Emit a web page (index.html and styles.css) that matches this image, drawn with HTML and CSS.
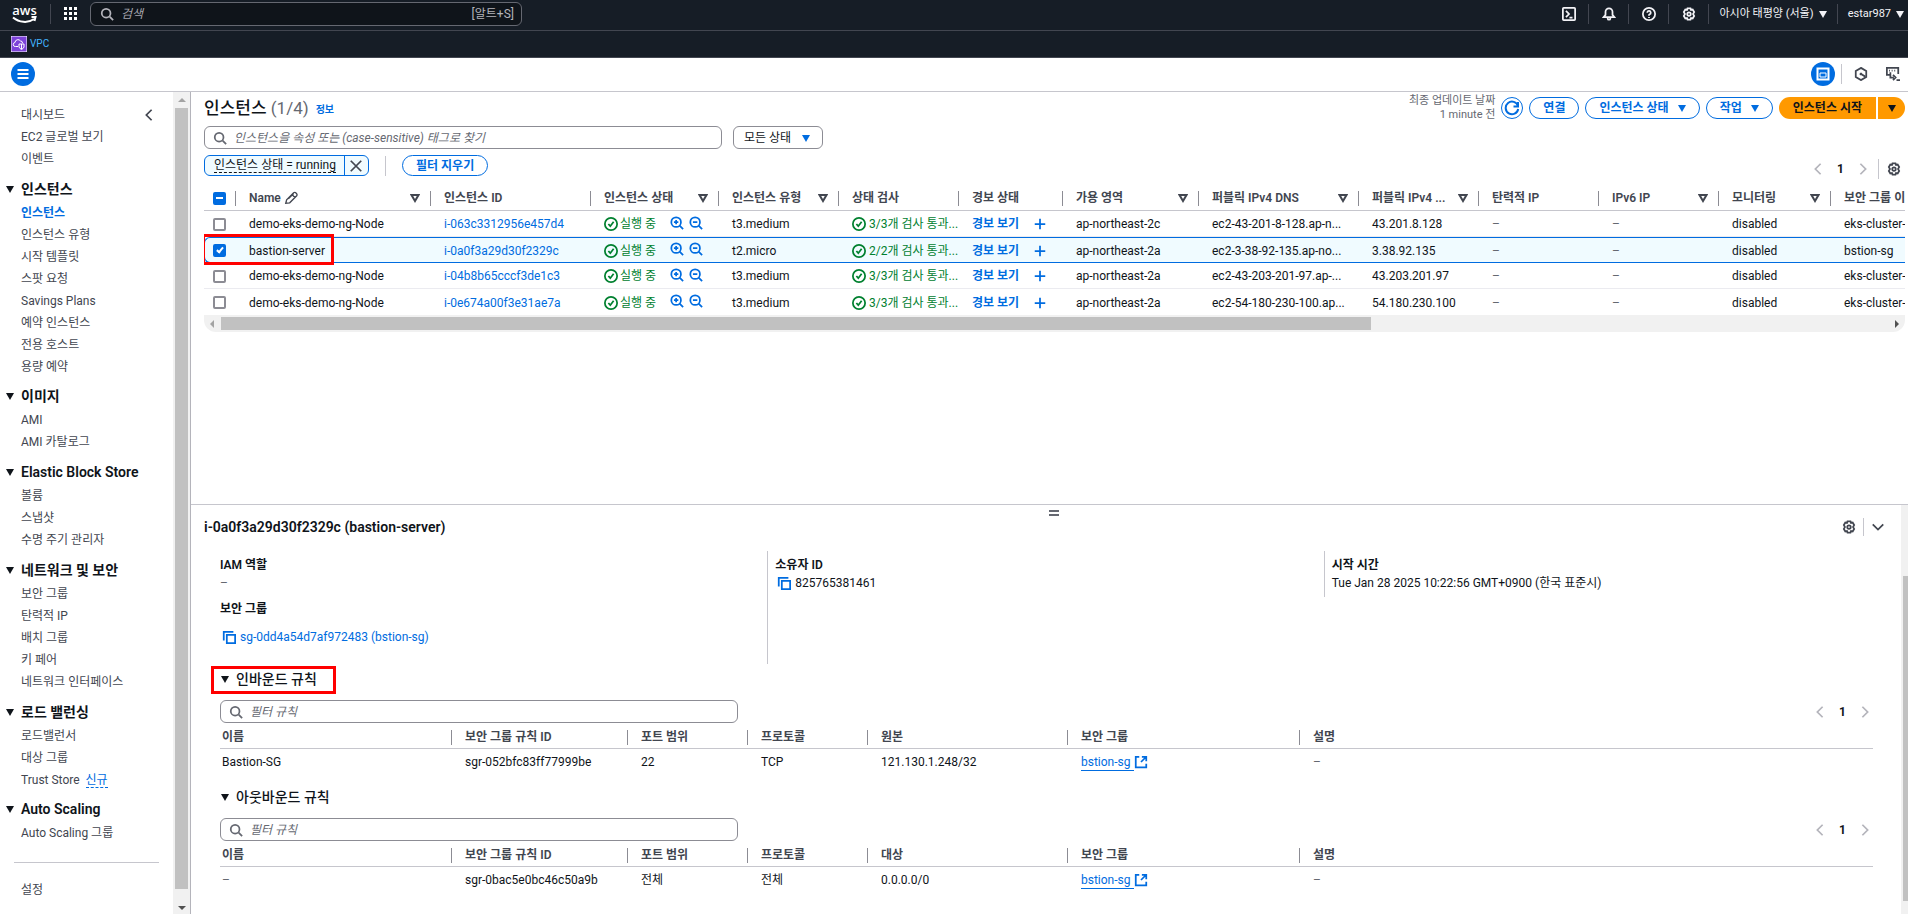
FILE: index.html
```html
<!DOCTYPE html>
<html lang="ko">
<head>
    <meta charset="UTF-8">
    <meta name="viewport" content="width=device-width, initial-scale=1.0">
    <title>인스턴스 | EC2</title>
    <link rel="stylesheet" href="styles.css">
</head>
<body>
<svg class="sprite" aria-hidden="true">
    <symbol id="search" viewBox="0 0 16 16"><circle cx="7" cy="7" r="5"/><path d="M11 11l4 4"/></symbol>
    <symbol id="caret" viewBox="0 0 8 8"><path d="M0 1h8L4 8z"/></symbol>
    <symbol id="sort" viewBox="0 0 10 10"><path d="M1.500 2h7L5 8z"/></symbol>
    <symbol id="gear" viewBox="0 0 16 16"><path d="M6.300 1.500h3.400l.6 1.800 1.900-.4 1.700 2.900L12.600 8l1.300 2.200-1.700 2.900-1.900-.4-.6 1.800H6.300l-.6-1.800-1.900.4-1.700-2.900L3.400 8 2.100 5.800l1.700-2.900 1.900.4z"/><circle cx="8" cy="8" r="2"/></symbol>
    <symbol id="left" viewBox="0 0 16 16"><path d="M11 2L5 8l6 6"/></symbol>
    <symbol id="right" viewBox="0 0 16 16"><path d="M5 2l6 6-6 6"/></symbol>
    <symbol id="down" viewBox="0 0 16 16"><path d="M2 5l6 6 6-6"/></symbol>
    <symbol id="ok" viewBox="0 0 16 16"><circle cx="8" cy="8" r="7"/><path d="M5 8l2.200 2.500L11 5.500"/></symbol>
    <symbol id="zoomin" viewBox="0 0 16 16"><circle cx="7" cy="7" r="5.500"/><path d="M11 11l4 4M4.500 7h5M7 4.500v5"/></symbol>
    <symbol id="zoomout" viewBox="0 0 16 16"><circle cx="7" cy="7" r="5.500"/><path d="M11 11l4 4M4.500 7h5"/></symbol>
    <symbol id="plus" viewBox="0 0 16 16"><path d="M8 2v12M2 8h12"/></symbol>
    <symbol id="copy" viewBox="0 0 16 16"><path d="M2 12V2h11"/><path d="M5.500 5.500H15V15H5.500z"/></symbol>
    <symbol id="external" viewBox="0 0 16 16"><path d="M6 2H2v12h12v-4M9 2h5v5M14 2L8 8"/></symbol>
</svg>

<header class="topnav">
    <a class="logo" href="#" aria-label="aws">
        <span>aws</span>
        <svg width="27" height="7" viewBox="0 0 27 7"><path d="M2 1.500c6 5 15 6 21 1.500M20.500 1h4l-1 4"/></svg>
    </a>
    <span class="nav-divider"></span>
    <button class="apps" aria-label="서비스">
        <svg width="14" height="14" viewBox="0 0 14 14"><path d="M0 0h3v3H0zM5 0h3v3H5zM10 0h3v3h-3zM0 5h3v3H0zM5 5h3v3H5zM10 5h3v3h-3zM0 10h3v3H0zM5 10h3v3H5zM10 10h3v3h-3z"/></svg>
    </button>
    <div class="nav-search">
        <svg class="icon"><use href="#search"/></svg>
        <input type="text" placeholder="검색" aria-label="검색">
        <span>[알트+S]</span>
    </div>
    <div class="nav-tools">
        <button aria-label="CloudShell"><svg class="icon" viewBox="0 0 16 16"><rect x="1" y="1" width="14" height="14" rx="1"/><path d="M4.500 4.500L8 8l-3.500 3.500M8.500 12H12"/></svg></button>
        <button aria-label="알림"><svg class="icon" viewBox="0 0 16 16"><path d="M2 11.500h12l-2-2.500V5.500a4 4 0 0 0-8 0V9zM6.500 12v1a1.500 1.500 0 0 0 3 0v-1"/></svg></button>
        <button aria-label="도움말"><svg class="icon" viewBox="0 0 16 16"><circle cx="8" cy="8" r="7"/><path d="M6 6.500a2 2 0 1 1 2.500 2L8 9v1M8 11.500v1"/></svg></button>
        <button aria-label="설정"><svg class="icon"><use href="#gear"/></svg></button>
        <button class="region">아시아 태평양 (서울) <svg class="caret"><use href="#caret"/></svg></button>
        <button class="account">estar987 <svg class="caret"><use href="#caret"/></svg></button>
    </div>
</header>

<nav class="favorites">
    <a href="#">
        <svg width="16" height="16" viewBox="0 0 16 16"><rect width="16" height="16" fill="#7d43d8"/><path d="M7 10.500H4.500a2 2 0 0 1-.5-4A3 3 0 0 1 9.500 5q2 0 2 2M8 8h5v3q-.5 1.500-2.500 2.500Q8.500 12.500 8 11zM10.500 8v5"/></svg>
        VPC
    </a>
</nav>

<div class="toolbar">
    <button class="round" aria-label="메뉴"><svg width="14" height="14" viewBox="0 0 14 14"><path d="M1.500 3h11M1.500 7h11M1.500 11h11"/></svg></button>
    <div class="toolbar-right">
        <button class="round" aria-label="분할 패널"><svg width="14" height="14" viewBox="0 0 14 14"><path d="M1.500 1.500h11v11h-11z"/><path class="thin" d="M4 6h6v4H4z"/></svg></button>
        <span class="divider"></span>
        <button class="plain" aria-label="Q"><svg class="icon" viewBox="0 0 16 16"><path d="M8 1l6 3.500v7L8 15l-6-3.500v-7z"/><path d="M8 8l5 3M8 6.500v3M6.500 8h3"/></svg></button>
        <button class="plain" aria-label="터미널"><svg class="icon" viewBox="0 0 16 16"><path d="M4 9H1V1h13v7M3.500 4h1M6.500 4h1M9.500 4h1M5 6v6h4M8 9l3 3-3 3M12 15h4"/></svg></button>
    </div>
</div>

<div class="layout">
    <aside class="sidebar">
        <nav class="menu">
            <section class="menu-top">
                <ul>
                    <li><a href="#">대시보드</a></li>
                    <li><a href="#">EC2 글로벌 보기</a></li>
                    <li><a href="#">이벤트</a></li>
                </ul>
                <button class="plain" aria-label="탐색 닫기"><svg class="icon"><use href="#left"/></svg></button>
            </section>
            <section>
                <h3><svg class="caret"><use href="#caret"/></svg>인스턴스</h3>
                <ul>
                    <li><a class="active" href="#">인스턴스</a></li>
                    <li><a href="#">인스턴스 유형</a></li>
                    <li><a href="#">시작 템플릿</a></li>
                    <li><a href="#">스팟 요청</a></li>
                    <li><a href="#">Savings Plans</a></li>
                    <li><a href="#">예약 인스턴스</a></li>
                    <li><a href="#">전용 호스트</a></li>
                    <li><a href="#">용량 예약</a></li>
                </ul>
            </section>
            <section>
                <h3><svg class="caret"><use href="#caret"/></svg>이미지</h3>
                <ul>
                    <li><a href="#">AMI</a></li>
                    <li><a href="#">AMI 카탈로그</a></li>
                </ul>
            </section>
            <section>
                <h3><svg class="caret"><use href="#caret"/></svg>Elastic Block Store</h3>
                <ul>
                    <li><a href="#">볼륨</a></li>
                    <li><a href="#">스냅샷</a></li>
                    <li><a href="#">수명 주기 관리자</a></li>
                </ul>
            </section>
            <section>
                <h3><svg class="caret"><use href="#caret"/></svg>네트워크 및 보안</h3>
                <ul>
                    <li><a href="#">보안 그룹</a></li>
                    <li><a href="#">탄력적 IP</a></li>
                    <li><a href="#">배치 그룹</a></li>
                    <li><a href="#">키 페어</a></li>
                    <li><a href="#">네트워크 인터페이스</a></li>
                </ul>
            </section>
            <section>
                <h3><svg class="caret"><use href="#caret"/></svg>로드 밸런싱</h3>
                <ul>
                    <li><a href="#">로드밸런서</a></li>
                    <li><a href="#">대상 그룹</a></li>
                    <li><a href="#">Trust Store</a> <a class="new" href="#">신규</a></li>
                </ul>
            </section>
            <section>
                <h3><svg class="caret"><use href="#caret"/></svg>Auto Scaling</h3>
                <ul>
                    <li><a href="#">Auto Scaling 그룹</a></li>
                </ul>
            </section>
            <section class="menu-bottom">
                <ul>
                    <li><a href="#">설정</a></li>
                </ul>
            </section>
        </nav>
        <div class="scroll-v">
            <svg class="arrow dim" viewBox="0 0 8 8"><path d="M0 6h8L4 2z"/></svg>
            <div class="thumb"></div>
            <svg class="arrow" viewBox="0 0 8 8"><path d="M0 2h8L4 6z"/></svg>
        </div>
    </aside>

    <main class="content">
        <section class="instances">
            <div class="title-row">
                <h1>인스턴스 <span>(1/4)</span></h1>
                <a class="info" href="#">정보</a>
                <div class="actions">
                    <p class="updated">최종 업데이트 날짜<br>1 minute 전</p>
                    <button class="btn refresh" aria-label="새로 고침"><svg width="16" height="16" viewBox="0 0 16 16"><path d="M14 2v4.500H9.500M14 6A6.300 6.300 0 1 0 14.200 9"/></svg></button>
                    <button class="btn">연결</button>
                    <button class="btn">인스턴스 상태 <svg class="caret"><use href="#caret"/></svg></button>
                    <button class="btn">작업 <svg class="caret"><use href="#caret"/></svg></button>
                    <div class="launch">
                        <button>인스턴스 시작</button>
                        <button aria-label="더 보기"><svg class="caret"><use href="#caret"/></svg></button>
                    </div>
                </div>
            </div>

            <div class="filter-row">
                <div class="search-box">
                    <svg class="icon"><use href="#search"/></svg>
                    <input type="text" placeholder="인스턴스을 속성 또는 (case-sensitive) 태그로 찾기" aria-label="인스턴스 찾기">
                </div>
                <div class="state-select">
                    <select aria-label="상태">
                        <option>모든 상태</option>
                    </select>
                    <svg class="caret"><use href="#caret"/></svg>
                </div>
            </div>

            <div class="token-row">
                <div class="token">
                    <button class="token-label"><span>인스턴스 상태 = running</span></button>
                    <button class="token-close" aria-label="제거"><svg class="icon" viewBox="0 0 16 16"><path d="M2 2l12 12M14 2L2 14"/></svg></button>
                </div>
                <span class="divider"></span>
                <button class="btn small">필터 지우기</button>
                <div class="pager">
                    <button aria-label="이전"><svg class="icon"><use href="#left"/></svg></button>
                    <b>1</b>
                    <button aria-label="다음"><svg class="icon"><use href="#right"/></svg></button>
                    <span class="divider"></span>
                    <button class="settings" aria-label="기본 설정"><svg class="icon"><use href="#gear"/></svg></button>
                </div>
            </div>

            <div class="table-wrap">
                <table class="instance-table">
                    <colgroup>
                        <col class="w-check"><col class="w-name"><col class="w-id"><col class="w-state"><col class="w-std"><col class="w-std"><col class="w-alarm"><col class="w-zone"><col class="w-id"><col class="w-std"><col class="w-std"><col class="w-std"><col class="w-monitor"><col class="w-group">
                    </colgroup>
                    <thead>
                        <tr>
                            <th><div><input class="some" type="checkbox" aria-label="모두 선택"></div></th>
                            <th><div><span>Name <svg class="icon" viewBox="0 0 16 16"><path d="M2 14l1-4 8-8q1.500-1 3 .5t.5 3l-8 8zM9 4l3.500 3.500M11 3L5 9"/></svg></span><svg class="sort"><use href="#sort"/></svg></div></th>
                            <th><div><span>인스턴스 ID</span></div></th>
                            <th><div><span>인스턴스 상태</span><svg class="sort"><use href="#sort"/></svg></div></th>
                            <th><div><span>인스턴스 유형</span><svg class="sort"><use href="#sort"/></svg></div></th>
                            <th><div><span>상태 검사</span></div></th>
                            <th><div><span>경보 상태</span></div></th>
                            <th><div><span>가용 영역</span><svg class="sort"><use href="#sort"/></svg></div></th>
                            <th><div><span>퍼블릭 IPv4 DNS</span><svg class="sort"><use href="#sort"/></svg></div></th>
                            <th><div><span>퍼블릭 IPv4 ...</span><svg class="sort"><use href="#sort"/></svg></div></th>
                            <th><div><span>탄력적 IP</span></div></th>
                            <th><div><span>IPv6 IP</span><svg class="sort"><use href="#sort"/></svg></div></th>
                            <th><div><span>모니터링</span><svg class="sort"><use href="#sort"/></svg></div></th>
                            <th><div><span>보안 그룹 이</span></div></th>
                        </tr>
                    </thead>
                    <tbody>
                        <tr>
                            <td><input type="checkbox" aria-label="i-063c3312956e457d4"></td>
                            <td>demo-eks-demo-ng-Node</td>
                            <td><a href="#">i-063c3312956e457d4</a></td>
                            <td><div class="state"><svg class="icon ok"><use href="#ok"/></svg><span class="ok">실행 중</span><svg class="icon"><use href="#zoomin"/></svg><svg class="icon"><use href="#zoomout"/></svg></div></td>
                            <td>t3.medium</td>
                            <td class="check ok"><svg class="icon ok"><use href="#ok"/></svg> 3/3개 검사 통과...</td>
                            <td><div class="alarm"><a href="#">경보 보기</a><svg class="icon"><use href="#plus"/></svg></div></td>
                            <td>ap-northeast-2c</td>
                            <td>ec2-43-201-8-128.ap-n...</td>
                            <td>43.201.8.128</td>
                            <td class="empty">–</td>
                            <td class="empty">–</td>
                            <td>disabled</td>
                            <td>eks-cluster-s</td>
                        </tr>
                        <tr class="selected">
                            <td><input type="checkbox" checked aria-label="i-0a0f3a29d30f2329c"><span class="mark mark-row"></span></td>
                            <td>bastion-server</td>
                            <td><a href="#">i-0a0f3a29d30f2329c</a></td>
                            <td><div class="state"><svg class="icon ok"><use href="#ok"/></svg><span class="ok">실행 중</span><svg class="icon"><use href="#zoomin"/></svg><svg class="icon"><use href="#zoomout"/></svg></div></td>
                            <td>t2.micro</td>
                            <td class="check ok"><svg class="icon ok"><use href="#ok"/></svg> 2/2개 검사 통과...</td>
                            <td><div class="alarm"><a href="#">경보 보기</a><svg class="icon"><use href="#plus"/></svg></div></td>
                            <td>ap-northeast-2a</td>
                            <td>ec2-3-38-92-135.ap-no...</td>
                            <td>3.38.92.135</td>
                            <td class="empty">–</td>
                            <td class="empty">–</td>
                            <td>disabled</td>
                            <td>bstion-sg</td>
                        </tr>
                        <tr>
                            <td><input type="checkbox" aria-label="i-04b8b65cccf3de1c3"></td>
                            <td>demo-eks-demo-ng-Node</td>
                            <td><a href="#">i-04b8b65cccf3de1c3</a></td>
                            <td><div class="state"><svg class="icon ok"><use href="#ok"/></svg><span class="ok">실행 중</span><svg class="icon"><use href="#zoomin"/></svg><svg class="icon"><use href="#zoomout"/></svg></div></td>
                            <td>t3.medium</td>
                            <td class="check ok"><svg class="icon ok"><use href="#ok"/></svg> 3/3개 검사 통과...</td>
                            <td><div class="alarm"><a href="#">경보 보기</a><svg class="icon"><use href="#plus"/></svg></div></td>
                            <td>ap-northeast-2a</td>
                            <td>ec2-43-203-201-97.ap-...</td>
                            <td>43.203.201.97</td>
                            <td class="empty">–</td>
                            <td class="empty">–</td>
                            <td>disabled</td>
                            <td>eks-cluster-s</td>
                        </tr>
                        <tr>
                            <td><input type="checkbox" aria-label="i-0e674a00f3e31ae7a"></td>
                            <td>demo-eks-demo-ng-Node</td>
                            <td><a href="#">i-0e674a00f3e31ae7a</a></td>
                            <td><div class="state"><svg class="icon ok"><use href="#ok"/></svg><span class="ok">실행 중</span><svg class="icon"><use href="#zoomin"/></svg><svg class="icon"><use href="#zoomout"/></svg></div></td>
                            <td>t3.medium</td>
                            <td class="check ok"><svg class="icon ok"><use href="#ok"/></svg> 3/3개 검사 통과...</td>
                            <td><div class="alarm"><a href="#">경보 보기</a><svg class="icon"><use href="#plus"/></svg></div></td>
                            <td>ap-northeast-2a</td>
                            <td>ec2-54-180-230-100.ap...</td>
                            <td>54.180.230.100</td>
                            <td class="empty">–</td>
                            <td class="empty">–</td>
                            <td>disabled</td>
                            <td>eks-cluster-s</td>
                        </tr>
                    </tbody>
                </table>
            </div>
            <div class="scroll-h">
                <svg class="arrow dim" viewBox="0 0 8 8"><path d="M6 0v8L2 4z"/></svg>
                <div class="track"><div class="thumb"></div></div>
                <svg class="arrow" viewBox="0 0 8 8"><path d="M2 0v8l4-4z"/></svg>
            </div>
        </section>

        <section class="split">
            <div class="split-body">
                <div class="handle"><svg width="10" height="8" viewBox="0 0 10 8"><path d="M0 2h10M0 6h10"/></svg></div>
                <div class="split-head">
                    <h2>i-0a0f3a29d30f2329c (bastion-server)</h2>
                    <button class="plain" aria-label="패널 설정"><svg class="icon"><use href="#gear"/></svg></button>
                    <span class="divider"></span>
                    <button class="plain" aria-label="패널 닫기"><svg class="icon"><use href="#down"/></svg></button>
                </div>
                <div class="details">
                    <dl>
                        <dt>IAM 역할</dt>
                        <dd class="empty">–</dd>
                        <dt class="second">보안 그룹</dt>
                        <dd class="sg"><svg class="copy"><use href="#copy"/></svg><a href="#">sg-0dd4a54d7af972483 (bstion-sg)</a></dd>
                    </dl>
                    <dl class="tall">
                        <dt>소유자 ID</dt>
                        <dd><svg class="copy"><use href="#copy"/></svg>825765381461</dd>
                    </dl>
                    <dl>
                        <dt>시작 시간</dt>
                        <dd>Tue Jan 28 2025 10:22:56 GMT+0900 (한국 표준시)</dd>
                    </dl>
                </div>

                <div class="rules">
                    <h4><svg class="caret"><use href="#caret"/></svg>인바운드 규칙<span class="mark mark-title"></span></h4>
                    <div class="rules-filter">
                        <div class="search-box">
                            <svg class="icon"><use href="#search"/></svg>
                            <input type="text" placeholder="필터 규칙" aria-label="인바운드 필터 규칙">
                        </div>
                        <div class="pager">
                            <button aria-label="이전"><svg class="icon"><use href="#left"/></svg></button>
                            <b>1</b>
                            <button aria-label="다음"><svg class="icon"><use href="#right"/></svg></button>
                        </div>
                    </div>
                    <table class="rule-table">
                        <colgroup>
                            <col class="r-name"><col class="r-id"><col class="w-std"><col class="w-std"><col class="r-source"><col class="r-name"><col>
                        </colgroup>
                        <thead>
                            <tr>
                                <th><div>이름</div></th>
                                <th><div>보안 그룹 규칙 ID</div></th>
                                <th><div>포트 범위</div></th>
                                <th><div>프로토콜</div></th>
                                <th><div>원본</div></th>
                                <th><div>보안 그룹</div></th>
                                <th><div>설명</div></th>
                            </tr>
                        </thead>
                        <tbody>
                            <tr>
                                <td>Bastion-SG</td>
                                <td>sgr-052bfc83ff77999be</td>
                                <td>22</td>
                                <td>TCP</td>
                                <td>121.130.1.248/32</td>
                                <td><a class="ext" href="#">bstion-sg </a><svg class="icon link"><use href="#external"/></svg></td>
                                <td class="empty">–</td>
                            </tr>
                        </tbody>
                    </table>
                </div>

                <div class="rules">
                    <h4><svg class="caret"><use href="#caret"/></svg>아웃바운드 규칙</h4>
                    <div class="rules-filter">
                        <div class="search-box">
                            <svg class="icon"><use href="#search"/></svg>
                            <input type="text" placeholder="필터 규칙" aria-label="아웃바운드 필터 규칙">
                        </div>
                        <div class="pager">
                            <button aria-label="이전"><svg class="icon"><use href="#left"/></svg></button>
                            <b>1</b>
                            <button aria-label="다음"><svg class="icon"><use href="#right"/></svg></button>
                        </div>
                    </div>
                    <table class="rule-table">
                        <colgroup>
                            <col class="r-name"><col class="r-id"><col class="w-std"><col class="w-std"><col class="r-source"><col class="r-name"><col>
                        </colgroup>
                        <thead>
                            <tr>
                                <th><div>이름</div></th>
                                <th><div>보안 그룹 규칙 ID</div></th>
                                <th><div>포트 범위</div></th>
                                <th><div>프로토콜</div></th>
                                <th><div>대상</div></th>
                                <th><div>보안 그룹</div></th>
                                <th><div>설명</div></th>
                            </tr>
                        </thead>
                        <tbody>
                            <tr>
                                <td class="empty">–</td>
                                <td>sgr-0bac5e0bc46c50a9b</td>
                                <td>전체</td>
                                <td>전체</td>
                                <td>0.0.0.0/0</td>
                                <td><a class="ext" href="#">bstion-sg </a><svg class="icon link"><use href="#external"/></svg></td>
                                <td class="empty">–</td>
                            </tr>
                        </tbody>
                    </table>
                </div>
            </div>
            <div class="split-scroll"><div class="thumb"></div></div>
        </section>
    </main>
</div>
</body>
</html>
```
FILE: styles.css
```css
* {
    box-sizing: border-box;
}

body {
    margin: 0;
    height: 100vh;
    display: flex;
    flex-direction: column;
    overflow: hidden;
    background: #fff;
    color: #0f141a;
    font-family: Roboto, "Noto Sans CJK KR", sans-serif;
    font-size: 12px;
    line-height: 16px;
}

h1, h2, h3, h4, p, ul, dl, dd {
    margin: 0;
    padding: 0;
}

ul {
    list-style: none;
}

a {
    color: #006ce0;
    text-decoration: none;
}

button, input, select {
    font: inherit;
    color: inherit;
    margin: 0;
}

button {
    display: flex;
    align-items: center;
    justify-content: center;
    padding: 0;
    border: 0;
    background: none;
    cursor: pointer;
}

.sprite {
    display: none;
}

.icon {
    width: 14px;
    height: 14px;
    flex: none;
    fill: none;
    stroke: currentColor;
    stroke-width: 2;
}

.caret {
    width: 8px;
    height: 8px;
    flex: none;
    fill: currentColor;
}

.divider {
    width: 1px;
    height: 20px;
    background: #c6c6cd;
}

.ok {
    color: #00802f;
}

.empty {
    color: #656871;
}

/* top navigation */
.topnav {
    display: flex;
    align-items: center;
    flex: none;
    height: 31px;
    padding: 0 4px 3px 11px;
    background: #161d26;
    border-bottom: 1px solid #424650;
    color: #f3f3f7;
}

.logo {
    width: 27px;
    color: #fff;
    font-family: "Open Sans", sans-serif;
    font-size: 13px;
    font-weight: 600;
    line-height: 11px;
    text-align: center;
}

.logo span, .logo svg {
    display: block;
}

.logo svg {
    fill: none;
    stroke: #fff;
    stroke-width: 2;
}

.nav-divider {
    width: 1px;
    height: 20px;
    margin: 0 13px 0 12px;
    background: #424650;
}

.apps {
    fill: #fff;
    margin-right: 12px;
}

.nav-search {
    display: flex;
    align-items: center;
    gap: 7px;
    width: 432px;
    height: 24px;
    padding: 0 7px 0 9px;
    border: 1px solid #656871;
    border-radius: 6px;
    background: #0f141a;
    color: #b4b4bb;
}

.nav-search input {
    flex: 1;
    min-width: 0;
    padding: 0;
    border: 0;
    background: none;
}

.nav-search input::placeholder, .search-box input::placeholder {
    color: #656871;
    font-style: italic;
    opacity: 1;
}

.nav-search input::placeholder {
    color: #a4a4ad;
}

.nav-tools {
    display: flex;
    align-items: center;
    margin-left: auto;
    font-size: 11px;
}

.nav-tools button {
    width: 40px;
    height: 20px;
    border-right: 1px solid #424650;
}

.nav-tools .region {
    width: 129px;
    gap: 5px;
}

.nav-tools .account {
    width: 66px;
    gap: 5px;
    border: 0;
    justify-content: flex-end;
}

.favorites {
    flex: none;
    display: flex;
    align-items: center;
    height: 27px;
    padding: 0 11px;
    background: #161d26;
    border-bottom: 1px solid #424650;
}

.favorites a {
    display: flex;
    align-items: center;
    gap: 3px;
    color: #42b4ff;
    font-size: 10px;
}

.favorites svg {
    fill: none;
    stroke: #fff;
}

.toolbar {
    flex: none;
    display: flex;
    align-items: center;
    justify-content: space-between;
    height: 34px;
    padding: 0 2px 2px 11px;
    border-bottom: 1px solid #c6c6cd;
}

.toolbar-right {
    display: flex;
    align-items: center;
    gap: 6px;
}

.toolbar-right .plain {
    width: 26px;
}

.round {
    width: 24px;
    height: 24px;
    border-radius: 50%;
    background: #006ce0;
}

.round svg {
    fill: none;
    stroke: #fff;
    stroke-width: 2;
}

.round .thin {
    stroke-width: 1;
}

.plain {
    color: #424650;
}

/* side menu */
.layout {
    flex: 1;
    min-height: 0;
    display: flex;
}

.sidebar {
    flex: none;
    display: flex;
    width: 191px;
    border-right: 1px solid #b4b4bb;
}

.menu {
    flex: 1;
    display: flex;
    flex-direction: column;
    justify-content: space-between;
    padding: 12px 14px 13px 6px;
    white-space: nowrap;
}

.menu-top {
    display: flex;
    justify-content: space-between;
    align-items: flex-start;
}

.menu-top .icon {
    margin: 4px 3px 0 0;
}

.menu li, .menu h3 {
    height: 22px;
    line-height: 22px;
}

.menu h3 {
    display: flex;
    align-items: center;
    gap: 7px;
    margin-bottom: 2px;
    font-size: 14px;
    font-weight: 600;
}

.menu ul {
    padding-left: 15px;
}

.menu a {
    color: #424650;
}

.menu a.active {
    color: #006ce0;
    font-weight: 600;
}

.menu a.new {
    margin-left: 3px;
    color: #006ce0;
    border-bottom: 1px dashed #006ce0;
}

.menu-bottom {
    margin-left: 8px;
    margin-top: 10px;
    padding-top: 16px;
    border-top: 1px solid #c6c6cd;
}

.menu-bottom ul {
    padding-left: 7px;
}

.scroll-v {
    display: flex;
    flex-direction: column;
    align-items: center;
    justify-content: space-between;
    width: 17px;
    padding: 4px 0 2px;
    background: #f1f1f1;
}

.scroll-v .thumb {
    flex: 1;
    width: 13px;
    margin: 4px 0 15px;
    background: #c1c1c1;
}

.arrow {
    width: 8px;
    height: 8px;
    flex: none;
    fill: #505050;
}

.arrow.dim {
    fill: #a3a3a3;
}

/* instance list */
.content {
    flex: 1;
    min-width: 0;
    display: flex;
    flex-direction: column;
}

.instances {
    flex: 1;
    min-height: 0;
    padding: 3px 3px 0 13px;
}

.title-row {
    display: flex;
    align-items: center;
    height: 26px;
}

h1 {
    font-size: 17px;
    font-weight: 500;
    line-height: 24px;
}

h1 span {
    color: #656871;
    font-weight: 400;
}

.info {
    margin: 4px 0 0 7px;
    font-size: 10px;
    font-weight: 600;
}

.actions {
    display: flex;
    align-items: center;
    gap: 6px;
    margin-left: auto;
}

.updated {
    color: #656871;
    font-size: 11px;
    line-height: 14px;
    text-align: right;
}

.btn {
    gap: 9px;
    height: 22px;
    padding: 0 13px;
    border: 1px solid #006ce0;
    border-radius: 11px;
    background: #fff;
    color: #006ce0;
    font-weight: 600;
    white-space: nowrap;
}

.btn.refresh {
    width: 22px;
    padding: 0;
}

.refresh svg {
    fill: none;
    stroke: #006ce0;
    stroke-width: 2;
}

.launch {
    display: flex;
    gap: 2px;
    font-weight: 600;
}

.launch button {
    height: 22px;
    padding: 0 14px;
    background: #f90;
    border-radius: 11px 0 0 11px;
}

.launch button + button {
    width: 27px;
    padding: 0;
    border-radius: 0 11px 11px 0;
}

.filter-row {
    display: flex;
    gap: 11px;
    padding-top: 5px;
}

.search-box {
    display: flex;
    align-items: center;
    gap: 7px;
    width: 518px;
    height: 23px;
    padding: 0 8px;
    border: 1px solid #8c8c94;
    border-radius: 6px;
    color: #656871;
}

.search-box input {
    flex: 1;
    min-width: 0;
    padding: 0;
    border: 0;
    outline: 0;
}

.state-select {
    display: flex;
    align-items: center;
    width: 90px;
    height: 23px;
    padding: 0 12px 0 10px;
    border: 1px solid #8c8c94;
    border-radius: 6px;
}

.state-select select {
    appearance: none;
    flex: 1;
    min-width: 0;
    padding: 0;
    border: 0;
    background: none;
}

.state-select .caret {
    color: #006ce0;
}

.token-row {
    display: flex;
    align-items: center;
    gap: 16px;
    padding-top: 6px;
}

.token {
    display: flex;
    height: 21px;
    border: 1px solid #006ce0;
    border-radius: 6px;
    background: #f0fbff;
}

.token-label {
    padding: 0 8px 0 9px;
}

.token-label span {
    line-height: 14px;
    border-bottom: 1px dashed #0f141a;
}

.token-close {
    width: 24px;
    border-left: 1px solid #006ce0;
    color: #424650;
}

.btn.small {
    height: 21px;
}

.pager {
    display: flex;
    align-items: center;
    margin-left: auto;
    color: #b4b4bb;
}

.pager b {
    width: 31px;
    color: #0f141a;
    text-align: center;
}

.pager .divider {
    margin: 0 8px;
}

.pager .settings {
    margin-right: 4px;
    color: #424650;
}

.token-row .pager {
    height: 21px;
    padding-top: 6px;
}

.table-wrap {
    overflow: hidden;
    padding-top: 9px;
}

table {
    table-layout: fixed;
    border-collapse: separate;
    border-spacing: 0;
}

.instance-table {
    width: 1760px;
}

.w-check { width: 32px; }
.w-name { width: 195px; }
.w-id { width: 160px; }
.w-state { width: 128px; }
.w-std { width: 120px; }
.w-alarm { width: 104px; }
.w-zone { width: 136px; }
.w-monitor { width: 112px; }
.w-group { width: 133px; }
.r-name { width: 232px; }
.r-id { width: 176px; }
.r-source { width: 200px; }

th, td {
    height: 26px;
    padding: 1px 0 0 13px;
    text-align: left;
    white-space: nowrap;
    border-bottom: 1px solid #ebebf0;
}

th {
    color: #424650;
    font-weight: 600;
    border-bottom-color: #c6c6cd;
}

th div {
    display: flex;
    align-items: center;
    justify-content: space-between;
    height: 15px;
    border-right: 1px solid #8c8c94;
}

th:last-child div {
    border-right: 0;
}

th .icon {
    vertical-align: -3px;
    stroke-width: 1.500;
}

.sort {
    width: 10px;
    height: 10px;
    margin-right: 10px;
    fill: none;
    stroke: #424650;
    stroke-width: 2;
}

th:first-child, td:first-child {
    padding-left: 9px;
}

tbody tr:last-child td {
    border-bottom: 0;
}

.selected td {
    background: #f0fbff;
    border-top: 1px solid #006ce0;
    border-bottom-color: #006ce0;
}

.selected td:first-child {
    position: relative;
    border-left: 1px solid #006ce0;
    border-radius: 6px 0 0 6px;
    padding-left: 8px;
}

td input, th input {
    appearance: none;
    display: block;
    width: 13px;
    height: 13px;
    border: 2px solid #8c8c94;
    border-radius: 2px;
    background: #fff;
}

input:checked, input.some {
    display: flex;
    align-items: center;
    justify-content: center;
    border-color: #006ce0;
    background: #006ce0;
}

input.some::after {
    content: "";
    width: 7px;
    height: 2px;
    background: #fff;
}

input:checked::after {
    content: "";
    flex: none;
    width: 2px;
    height: 5px;
    margin-bottom: 2px;
    border: solid #fff;
    border-width: 0 2px 2px 0;
    transform: rotate(40deg);
}

.state, .alarm {
    display: flex;
    align-items: center;
    gap: 2px;
}

.state .icon, .alarm .icon {
    color: #006ce0;
}

.state .icon.ok {
    color: #00802f;
}

.state span {
    margin-right: 12px;
}

.state .icon + .icon {
    margin-left: 3px;
}

.state span ~ .icon {
    margin-bottom: 3px;
}

.check .icon {
    vertical-align: -3px;
}

.alarm {
    gap: 14px;
    font-weight: 600;
}

.scroll-h {
    display: flex;
    align-items: center;
    height: 17px;
    padding: 0 4px;
    background: #f1f1f1;
    border-radius: 0 0 12px 12px;
}

.scroll-h .track {
    flex: 1;
    padding: 0 5px;
}

.scroll-h .thumb {
    width: 69%;
    height: 13px;
    background: #c1c1c1;
}

/* highlight frames */
.mark {
    position: absolute;
    border: 3px solid #f00;
    pointer-events: none;
}

.mark-row {
    top: -4px;
    left: -3px;
    z-index: 1;
    width: 132px;
    height: 31px;
}

.mark-title {
    top: -1px;
    left: -9px;
    width: 125px;
    height: 28px;
}

/* split panel */
.split {
    flex: none;
    display: flex;
    height: 410px;
    border-top: 1px solid #c6c6cd;
}

.split-body {
    flex: 1;
    min-width: 0;
    padding: 0 20px 0 13px;
}

.handle {
    display: flex;
    justify-content: center;
    height: 12px;
    padding: 4px 0 0 22px;
}

.handle svg {
    stroke: #656871;
    stroke-width: 2;
}

.split-head {
    display: flex;
    align-items: center;
    gap: 7px;
    height: 20px;
}

.split-head h2 {
    flex: 1;
    font-size: 14px;
    font-weight: 600;
}

.split-head .divider {
    height: 18px;
}

.split-head button:last-child {
    margin-right: -4px;
}

.details {
    display: grid;
    grid-template-columns: 1fr 1fr 1fr;
    align-items: start;
    margin: 14px 1px 0 7px;
    height: 113px;
}

.details dl {
    height: 46px;
    padding: 5px 0 0 9px;
}

.details dl + dl {
    border-left: 1px solid #c6c6cd;
    padding-left: 7px;
}

.details .tall {
    height: 113px;
}

.details dt {
    line-height: 18px;
    font-weight: 600;
}

.details dd {
    display: flex;
    align-items: center;
    height: 17px;
}

.details .second {
    margin-top: 9px;
}

.details .sg {
    margin-top: 10px;
}

.copy {
    width: 14px;
    height: 14px;
    margin: 0 4px 0 2px;
    fill: none;
    stroke: #006ce0;
    stroke-width: 2;
}

.rules {
    margin: 0 8px 8px 16px;
    padding-top: 3px;
}

.rules h4 {
    position: relative;
    display: flex;
    align-items: center;
    gap: 7px;
    height: 24px;
    margin-bottom: 9px;
    padding-left: 1px;
    font-size: 14px;
    font-weight: 500;
}

.rules-filter {
    display: flex;
    align-items: center;
}

.rules .pager {
    margin-right: 1px;
}

.rule-table {
    width: 100%;
}

.rule-table th, .rule-table td {
    height: 25px;
}

.rule-table th {
    height: 26px;
    padding-top: 3px;
}

.rule-table th:first-child, .rule-table td:first-child {
    padding-left: 2px;
}

.ext {
    display: inline-block;
    line-height: 15px;
    padding-right: 3px;
    border-bottom: 1px solid #006ce0;
}

.link {
    vertical-align: -3px;
    color: #006ce0;
}

.split-scroll {
    width: 7px;
    padding: 71px 0 13px 2px;
    background: #f1f1f1;
}

.split-scroll .thumb {
    height: 100%;
    background: #c1c1c1;
}
```
